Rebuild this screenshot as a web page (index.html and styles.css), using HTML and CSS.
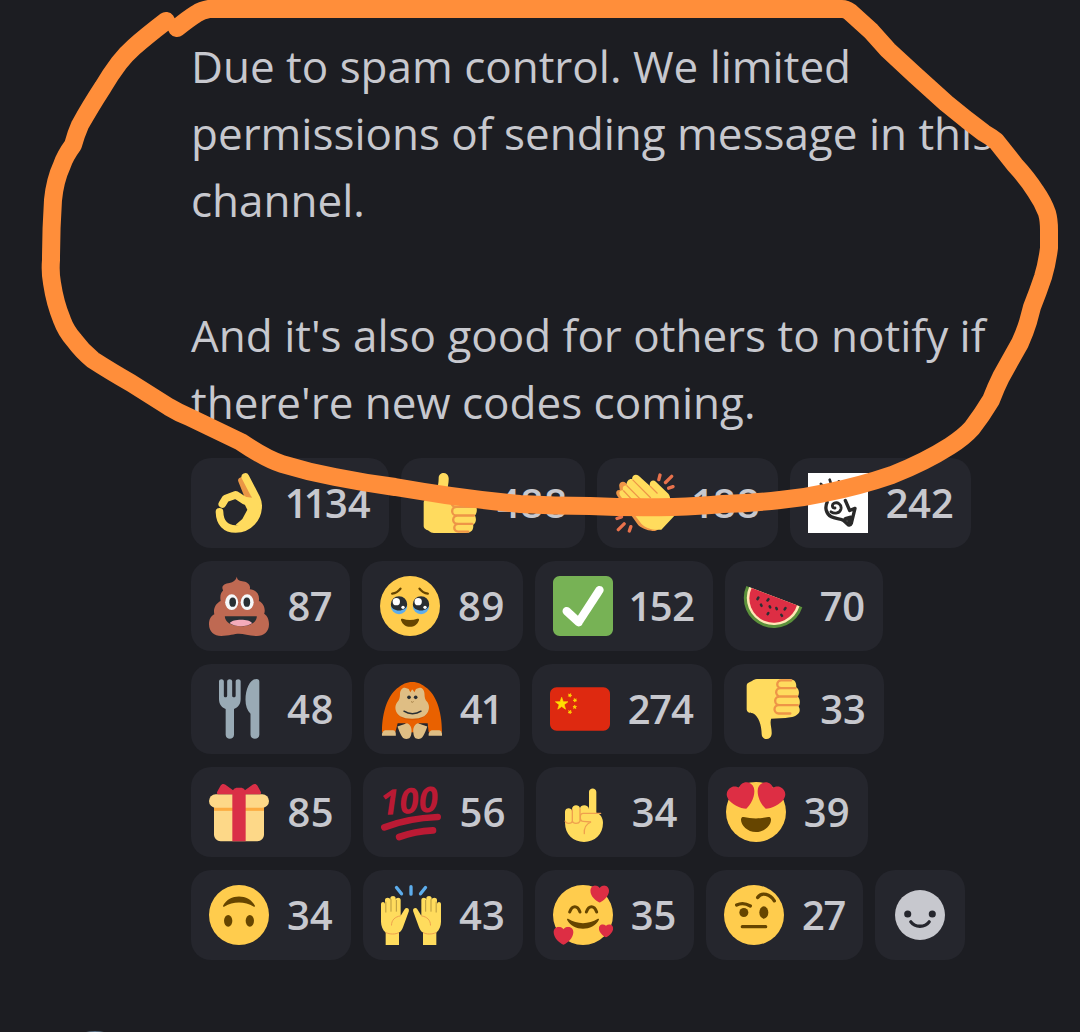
FILE: index.html
```html
<!DOCTYPE html>
<html lang="en">
<head>
<meta charset="utf-8">
<meta name="viewport" content="width=device-width, initial-scale=1">
<title>Codes channel</title>
<link rel="stylesheet" href="styles.css">
</head>
<body>
<svg class="defs" aria-hidden="true">
  <symbol id="thumb" viewBox="0 0 36 36">
    <path fill="#FFDB5E" d="M2.800 4C3 2 5 2 6.600.8 7.400.2 8.500 0 10 0h18c3 0 5 1.500 4.500 5 2 1 2 4 1 5.500 1.500 1.500 1.500 4.500.5 6 2 3.500-1 6-5 6.500-4 .7-8 .8-11.500.8-1 3.200.5 5.200.3 9.200-.3 4-5.900 4-6 0C11.800 28 10 22 6.500 20.500c-2.500 0-3.700-.8-3.700-2.500z"/>
    <path fill="none" stroke="#EE9547" stroke-width="1.400" stroke-linecap="round" d="M29.500.8h-6a2.300 2.300 0 0 0 0 4.700H32M23 5.500a2.500 2.500 0 0 0 0 5h10M22.500 10.500a2.600 2.600 0 0 0 0 5.200h11M22 15.700a2.500 2.500 0 0 0 0 5h7"/>
  </symbol>
  <symbol id="heart" viewBox="0 0 12 11">
    <path fill="#DD2E44" d="M11.900 3.400C11.900 1.500 10.500.1 8.700.1 7.600.1 6.600.7 6 1.600 5.400.7 4.400.1 3.300.1 1.500.1.1 1.500.1 3.400.1 6.700 3.500 9.900 6 10.900c2.500-1 5.900-4.200 5.900-7.500z"/>
  </symbol>
  <symbol id="raised-hand" viewBox="0 0 18 36">
    <path fill="#FFDC5D" d="M2.800 28.500C1 27 0 24.500 0 22V11.500c0-1.700 2.400-1.700 2.400 0V9c0-1.800 3.200-1.800 3.200 0V8c0-1.800 3.200-1.800 3.200 0v1c0-1.800 3-1.800 3 0v9.500l2.400-4c.9-1.300 3-.5 2.500 1.200l-3.500 9.600c-.6 1.600-1.300 2.500-2.400 3.200V36h-8z"/>
    <path fill="none" stroke="#B9983F" stroke-width=".6" d="M2.900 10v6.500M6 8.500V16M9.200 9v7"/>
    <path fill="none" stroke="#EFA04E" stroke-width=".6" d="M11.800 18.500c-3.500.6-5.500 2.500-5.500 5.800M2.800 28.500c2.500 1.200 6 1.200 8 0"/>
  </symbol>
</svg>

<main class="chat">
  <article class="message">
    <div class="text">
      <p>Due to spam control. We limited permissions of sending message in this channel.</p>
      <p>And it's also good for others to notify if there're new codes coming.</p>
    </div>

    <div class="reactions">
      <button class="reaction">
        <svg viewBox="0 0 36 36" aria-hidden="true">
          <path fill="none" stroke="#EA9645" stroke-width="4" stroke-linecap="round" d="M19.500 4.500L24.500 17"/>
          <path fill="none" stroke="#FFDB5E" stroke-width="4.600" stroke-linecap="round" stroke-linejoin="round" d="M6.300 23.300C6.500 30 10 33.600 16 33.600c8 0 13.500-6.500 13.500-14.100 0-1.500-.3-2.700-1-4.200L21.800 2.400"/>
          <path fill="none" stroke="#FFDB5E" stroke-width="4.600" stroke-linecap="round" stroke-linejoin="round" d="M8 18.600l2-3.300 6-2.200 5.500 3.500"/>
          <path fill="#FFDB5E" d="M19 14l8 1 3 8-7 10-7-2 4-3.400L23 22z"/>
        </svg>
        <span class="count">1134</span>
      </button>
      <button class="reaction">
        <svg class="flip" viewBox="0 0 36 36" aria-hidden="true"><use href="#thumb"/></svg>
        <span class="count">488</span>
      </button>
      <button class="reaction">
        <svg viewBox="0 0 36 36" aria-hidden="true">
          <path fill="#EE9547" d="M2.500 7.500c0-2 2.500-3 4-1.500L30 26c-1 5-3 8-6 8.800-4-.2-7-1-10-3.500L1.500 14c-1.600-2-.6-4 1.400-3.700z"/>
          <path fill="#FFDC5D" d="M10.300 3.600C10 1.200 12.700.2 14.200 1.700L21 7.800c-.8-2.500 1.700-4.300 3.500-2.600L32 12.500c1 1 1 2.500 1.500 4.500l2.300 8.500-8 8.500c-5 .5-9-.5-12-3.500L3.300 13.800c-1.600-2.200 0-4 1.700-3.300C4 8.500 5.300 7 7.300 7.600c-1-2.200 1-4.500 3-4z"/>
          <path fill="none" stroke="#EE9547" stroke-width=".7" d="M7 7.500l10 10M10.500 4l11 11M21 7.800l4.500 4.500M5 10.500l8 8.500"/>
          <path fill="none" stroke="#E9724C" stroke-width="2" stroke-linecap="round" d="M27 1.200l-.7 2.800M34 2l-3.700 3.700M34.800 8.200l-2.600.9M1.200 27.300l2.700-1M2 34l3.500-3.500M8.600 34.800l.9-2.600"/>
        </svg>
        <span class="count">188</span>
      </button>
      <button class="reaction">
        <svg viewBox="0 0 36 36" aria-hidden="true">
          <path fill="#fff" d="M0 0h36v36H0z"/>
          <g fill="none" stroke="#292929" stroke-linecap="round" stroke-linejoin="round">
            <path stroke-width="1.600" d="M7.700 6.500l2.500 2.500M13 4l1.500 4.500M18.500 5l-1 3.500"/>
            <path stroke-width="1.700" d="M13.800 23.300c2.200 1.500 5.400.8 6-1.800.5-2.600-2-4.300-4.200-3.300-1.600.9-1 3 .6 2.800"/>
            <path stroke-width="2" d="M11.500 17.500c-1.500 3-.8 7 2.500 8.800 2.500 1.300 5.600.8 7.500 2.300l2.800 2.600c.8.300 1.400-.3 1.700-1l2.200-9-3.200 1.300-2.600-6"/>
            <path stroke-width="2.600" d="M22.500 27.600l3.200-.8-1.200 3.400"/>
          </g>
        </svg>
        <span class="count">242</span>
      </button>

      <button class="reaction">
        <svg viewBox="0 0 36 36" aria-hidden="true">
          <path fill="#BF6952" d="M16.800.3c-.2 2.200 1.700 2.600 4 3 2.700.5 4.300 2.300 3.700 4.600 3.500.3 6.200 3.100 5.400 7.100 2.600 1 4.300 4.600 3.200 7.700C35.200 24 36 26.500 36 29c0 4.600-3.200 7-7.300 7-4.500 0-8-1.300-10.700-1.300S12 36 7.300 36C3.200 36 0 33.500 0 29c0-2.700 1-5 3.200-6C2.400 19.700 4 16.500 7 15c-.6-3 .2-5.300 1.500-6.300C7 6 9.200 4.600 12.300 4.200c2.200-.3 3.700-1.500 4.500-3.900z"/>
          <ellipse fill="#F5F8FA" cx="13.600" cy="15.700" rx="3.900" ry="4.700"/>
          <ellipse fill="#F5F8FA" cx="22.900" cy="15.700" rx="3.900" ry="4.700"/>
          <ellipse fill="#292F33" cx="14.200" cy="15.700" rx="2" ry="2.800"/>
          <ellipse fill="#292F33" cx="22.700" cy="15.700" rx="2" ry="2.800"/>
          <path fill="#292F33" d="M9.500 24.200h19.200c0 3.500-4 6-9.600 6s-9.600-2.500-9.600-6z"/>
          <path fill="#F4ABBA" d="M12.500 28.300c1.500-2.700 12-2.700 13.300 0-3.300 2.400-10 2.400-13.300 0z"/>
        </svg>
        <span class="count">87</span>
      </button>
      <button class="reaction">
        <svg viewBox="0 0 36 36" aria-hidden="true">
          <circle fill="#FFCC4D" cx="18" cy="18" r="18"/>
          <path fill="none" stroke="#664500" stroke-width="1.400" stroke-linecap="round" d="M7.300 10.600c2-.2 3.700-1.200 5-3M28.700 10.600c-2-.2-3.700-1.200-5-3"/>
          <circle fill="#5DADEC" cx="11.400" cy="18" r="4.900"/>
          <circle fill="#5DADEC" cx="24.600" cy="18" r="4.900"/>
          <path fill="#292F33" d="M6.500 17a4.900 4.900 0 0 1 9.800 0c0 5-9.800 5-9.800 0zM19.700 17a4.900 4.900 0 0 1 9.800 0c0 5-9.800 5-9.800 0z"/>
          <circle fill="#fff" cx="9.800" cy="15.400" r="2.200"/>
          <circle fill="#fff" cx="22.900" cy="15.400" r="2.200"/>
          <circle fill="#fff" cx="13.800" cy="18.800" r="1"/>
          <circle fill="#fff" cx="27" cy="18.800" r="1"/>
          <path fill="#664500" d="M12.600 26.500c-.2-.8.500-1 1-.8 2.700 1 6 1 8.800 0 .5-.2 1.200 0 1 .8-1 2.700-3 4-5.400 4s-4.400-1.300-5.400-4z"/>
        </svg>
        <span class="count">89</span>
      </button>
      <button class="reaction">
        <svg viewBox="0 0 36 36" aria-hidden="true">
          <path fill="#77B255" d="M36 32c0 2.209-1.791 4-4 4H4c-2.209 0-4-1.791-4-4V4c0-2.209 1.791-4 4-4h28c2.209 0 4 1.791 4 4v28z"/>
          <path fill="#FFF" d="M29.280 6.362c-1.156-.751-2.704-.422-3.458.736L14.936 23.877l-5.029-4.650c-1.014-.938-2.596-.875-3.533.138-.937 1.014-.875 2.596.139 3.533l7.209 6.666c.48.445 1.090.665 1.696.665.673 0 1.534-.282 2.099-1.139.332-.506 12.500-19.270 12.500-19.270.751-1.159.421-2.707-.737-3.458z"/>
        </svg>
        <span class="count">152</span>
      </button>
      <button class="reaction">
        <svg viewBox="0 0 36 36" aria-hidden="true">
          <path fill="#5C913B" d="M2 6a18 18 0 1 0 33.600 12.800z"/>
          <path fill="#FFE8B6" d="M3.700 6.600a16.200 16.200 0 1 0 30.200 11.600z"/>
          <path fill="#DD2E44" d="M5.200 7.200a14.600 14.600 0 1 0 27.200 10.400z"/>
          <path fill="none" stroke="#292F33" stroke-width="1.500" stroke-linecap="round" d="M9.200 13l-.5.900M15.300 13.900l-.6.800M10.800 17.200l.3.700M16 18.200l.3.600M20 19.200l.3.700M25.500 19.200l-.5.800M15.200 22.200l-.4.700M23 23.300l.4.600"/>
        </svg>
        <span class="count">70</span>
      </button>

      <button class="reaction">
        <svg viewBox="0 0 36 36" aria-hidden="true">
          <path fill="#99AAB5" d="M6 1.400c0-1.700 2.900-1.700 2.900 0V10c0 1.300 2 1.300 2 0V1.400c0-1.700 3-1.700 3 0V10c0 1.300 2.100 1.300 2.100 0V1.400c0-1.700 3-1.700 3 0V12c0 3-1.500 5-4 6v15.500c0 3.200-5 3.200-5 0V18c-2.500-1-4-3-4-6z"/>
          <path fill="#99AAB5" d="M28.500 0c1.200 0 1.700.6 1.700 1.700v31.800c0 3.200-5.300 3.200-5.300 0V20.800c-2-2-3-4.600-3-8.300C21.900 6 24.500 0 28.500 0z"/>
        </svg>
        <span class="count">48</span>
      </button>
      <button class="reaction">
        <svg viewBox="0 0 36 36" aria-hidden="true">
          <path fill="#E96100" d="M18.200 1.800c3.500 0 6 1.500 8 3.200 6 4 9.800 14 9.800 27h-8l-.6-5.500h-18L8 32H0C0 19 4 9 10 5c2-1.700 4.700-3.200 8.200-3.200z"/>
          <path fill="#C94F00" d="M8.500 18c0 9 19 9 19.500 0z" opacity=".5"/>
          <path fill="#E96100" d="M14 25h8v7h-8z"/>
          <path fill="#DFBE84" d="M10.800 9c0-4 4-5.500 7.300-2.500C21.500 3.500 25.500 5 25.500 9c0 2 .3 3.500 1.800 5 1.700 2.500 1 6.500-2 8.300-4 2-10.500 2-14.400 0-3-1.800-3.700-5.800-1.800-8.300 1.400-1.500 1.700-3 1.700-5z"/>
          <path fill="#E96100" d="M13 5l3 1 1 2 1.200-2L19.400 8l1-2 3-1-5.200-2.200z"/>
          <circle fill="#292F33" cx="16.200" cy="11" r="1.100"/>
          <circle fill="#292F33" cx="20.200" cy="11" r="1.100"/>
          <path fill="none" stroke="#292F33" stroke-width=".9" stroke-linecap="round" d="M13.200 19.300c3 2 7.200 2 10.200 0"/>
          <path fill="none" stroke="#A58048" stroke-width=".6" d="M17.400 13.500l.8.500.8-.5"/>
          <path fill="#DFBE84" d="M0 34c-.2-2 1-3.200 2.500-3.200h4C8 30.800 8.400 32 8.300 34zM28 34c-.2-2 1-3.200 2.500-3.200h3.200c1.800 0 2.500 1.200 2.300 3.200zM9.300 28.500l5.700-2c2 .8 3 2.500 2.700 5.500-.2 3-1.200 4-3 4-2.700 0-3.500-2.500-5.400-7.500zM27.200 28.500l-5.700-2c-2 .8-3 2.500-2.700 5.500.2 3 1.200 4 3 4 2.700 0 3.500-2.500 5.400-7.500z"/>
        </svg>
        <span class="count">41</span>
      </button>
      <button class="reaction">
        <svg viewBox="0 0 36 36" aria-hidden="true">
          <path fill="#DE2910" d="M36 27c0 2.209-1.791 4-4 4H4c-2.209 0-4-1.791-4-4V9c0-2.209 1.791-4 4-4h28c2.209 0 4 1.791 4 4v18z"/>
          <path fill="#FFDE02" stroke="#FFDE02" stroke-width=".4" d="M11.136 8.977l.736.356.589-.566-.111.81.72.386-.804.144-.144.804-.386-.72-.81.111.566-.589zm4.665 2.941l-.356.735.566.590-.809-.112-.386.721-.144-.805-.805-.144.721-.386-.112-.810.590.566zm-.957 3.779l.268.772.817.017-.651.493.237.783-.671-.467-.671.467.236-.783-.651-.493.817-.017zm-3.708 3.280l.736.356.589-.566-.111.810.720.386-.804.144-.144.804-.386-.720-.810.111.566-.589zM7 10.951l.929 2.671 2.826.058-2.253 1.708.819 2.706L7 16.479l-2.321 1.615.819-2.706-2.253-1.708 2.826-.058z"/>
        </svg>
        <span class="count">274</span>
      </button>
      <button class="reaction">
        <svg viewBox="0 0 36 36" aria-hidden="true"><use href="#thumb"/></svg>
        <span class="count">33</span>
      </button>

      <button class="reaction">
        <svg viewBox="0 0 36 36" aria-hidden="true">
          <path fill="#FDD888" d="M33 31.500c0 2.200-1.800 4-4 4H7c-2.200 0-4-1.800-4-4V14h30z"/>
          <rect fill="#FCAB40" x="3" y="14" width="30" height="3.300"/>
          <rect fill="#FDD888" y="7.400" width="36" height="8" rx="4"/>
          <path fill="#DA2F47" d="M19 3.500h-2c-1.700 0-3 1.300-3 3v29h8v-29c0-1.700-1.300-3-3-3z"/>
          <path fill="#DA2F47" d="M16 7.400c1.100 0 1.263-.516.361-1.147L9.639 1.547c-.902-.631-2.085-.366-2.631.589L4.992 5.664C4.446 6.619 4.900 7.400 6 7.400h10zm4 0c-1.100 0-1.263-.516-.361-1.147l6.723-4.706c.901-.631 2.085-.366 2.631.589l2.016 3.527C31.554 6.619 31.100 7.400 30 7.400H20z"/>
        </svg>
        <span class="count">85</span>
      </button>
      <button class="reaction">
        <svg viewBox="0 0 36 36" aria-hidden="true">
          <text class="hundred" x="0" y="20" transform="rotate(-4 0 20)">100</text>
          <path fill="none" stroke="#BB1A34" stroke-width="4" stroke-linecap="round" d="M2 27.200c9.500-3.700 20-5.700 32-6.200M10.900 33c6-2.200 13-3.600 20.300-4"/>
        </svg>
        <span class="count">56</span>
      </button>
      <button class="reaction">
        <svg viewBox="0 0 36 36" aria-hidden="true">
          <path fill="#FFDC5D" d="M21 6c0-2.900 4.400-2.900 4.400 0v12.500c2.600.8 4 3.200 4 6 0 7-5 11.500-11.400 11.500S6.600 31.500 6.600 24.500v-6.700c0-2.700 4-2.700 4.200-.6v-1c0-3 4.600-3 4.800-.3.200-2.600 5-2.700 5.400.3z"/>
          <path fill="none" stroke="#EFA04E" stroke-width=".8" stroke-linecap="round" d="M6.700 23.500c.5 1.700 4 1.700 4.300 0v-7M11 23.500c.5 1.700 3.800 1.700 4.600 0V16M28 18.800h-10.500c-2.300 0-2.300 4.600 0 4.800l4.700.4c-2.500 1-4.300 3.300-4 7"/>
        </svg>
        <span class="count">34</span>
      </button>
      <button class="reaction">
        <svg viewBox="0 0 36 36" aria-hidden="true">
          <circle fill="#FFCC4D" cx="18" cy="18" r="18"/>
          <path fill="#664500" d="M18 21.849c-2.966 0-4.935-.346-7.369-.819-.557-.106-1.638 0-1.638 1.638 0 3.275 3.763 7.369 9.007 7.369s9.007-4.094 9.007-7.369c0-1.638-1.082-1.745-1.638-1.638-2.434.473-4.402.819-7.369.819"/>
          <path fill="#DD2E44" d="M16.650 3.281C15.791.850 13.126-.426 10.694.431c-1.476.520-2.521 1.711-2.928 3.104-1.191-.829-2.751-1.100-4.225-.580C1.111 3.813-.167 6.480.692 8.911c.122.344.284.663.472.958 1.951 3.582 7.588 6.100 11.001 6.131 2.637-2.167 5.446-7.665 4.718-11.677-.038-.348-.113-.698-.233-1.042zm2.700 0C20.209.850 22.875-.426 25.306.431c1.476.520 2.521 1.711 2.929 3.104 1.191-.829 2.751-1.100 4.225-.580 2.430.858 3.707 3.525 2.850 5.956-.123.344-.284.663-.473.958-1.951 3.582-7.588 6.100-11.002 6.131-2.637-2.167-5.445-7.665-4.717-11.677.037-.348.112-.698.232-1.042z"/>
        </svg>
        <span class="count">39</span>
      </button>

      <button class="reaction">
        <svg viewBox="0 0 36 36" aria-hidden="true">
          <circle fill="#FFCC4D" cx="18" cy="18" r="18"/>
          <ellipse fill="#664500" cx="11.500" cy="21.500" rx="2.500" ry="3.500"/>
          <ellipse fill="#664500" cx="24.500" cy="21.500" rx="2.500" ry="3.500"/>
          <path fill="#664500" d="M8.500 12.300C12 5 24 5 27.500 12.300c.3.700-.3 1-.8.600-5-3.300-12.400-3.300-17.400 0-.5.400-1.100.1-.8-.6z"/>
        </svg>
        <span class="count">34</span>
      </button>
      <button class="reaction">
        <svg viewBox="0 0 36 36" aria-hidden="true">
          <use href="#raised-hand" width="18" height="36"/>
          <use href="#raised-hand" width="18" height="36" transform="matrix(-1 0 0 1 36 0)"/>
          <path fill="none" stroke="#5DADEC" stroke-width="2" stroke-linecap="round" d="M9.300 1.500l3 3.800M18 1v4.500M26.700 1.500l-3 3.800"/>
        </svg>
        <span class="count">43</span>
      </button>
      <button class="reaction">
        <svg viewBox="0 0 36 36" aria-hidden="true">
          <circle fill="#FFCC4D" cx="18" cy="18" r="18"/>
          <path fill="none" stroke="#664500" stroke-width="1.800" stroke-linecap="round" d="M10 16.200c1.500-4.300 4.700-4.300 6.200 0M20 16.200c1.500-4.300 4.700-4.300 6.200 0"/>
          <path fill="#664500" d="M8.500 21c-.3-.7.300-1 .8-.6 5 3.300 12.400 3.300 17.400 0 .5-.4 1.100-.1.800.6-3.500 7-15.500 7-19 0z"/>
          <use href="#heart" x="22.300" y=".2" width="11.400" height="10.500"/>
          <use href="#heart" x="0" y="25" width="12.600" height="11"/>
          <use href="#heart" x="27.400" y="23.500" width="8.800" height="8"/>
        </svg>
        <span class="count">35</span>
      </button>
      <button class="reaction">
        <svg viewBox="0 0 36 36" aria-hidden="true">
          <circle fill="#FFCC4D" cx="18" cy="18" r="18"/>
          <ellipse fill="#664500" cx="11.900" cy="16.500" rx="2.700" ry="2.700"/>
          <ellipse fill="#664500" cx="23.900" cy="16.500" rx="2.700" ry="3.700"/>
          <path fill="none" stroke="#664500" stroke-width="2" stroke-linecap="round" d="M7.600 12c2.500-1.200 5.500-1 8.200.6M20.200 7.500c2.500-3.700 7.500-1.800 10 2M11 25h14"/>
        </svg>
        <span class="count">27</span>
      </button>
      <button class="reaction add" aria-label="Add reaction">
        <svg viewBox="0 0 24 24" aria-hidden="true">
          <circle fill="#c7c8ce" cx="12" cy="12" r="12"/>
          <circle fill="#25262d" cx="6.100" cy="11.500" r="1.700"/>
          <circle fill="#25262d" cx="17.900" cy="11.500" r="1.700"/>
          <path fill="none" stroke="#25262d" stroke-width="1.600" stroke-linecap="round" d="M7.600 15.300c2 2.800 6.800 2.800 8.800 0"/>
        </svg>
      </button>
    </div>
  </article>

  <article class="next-message">
    <span class="avatar"></span>
  </article>

  <!-- hand drawn marker line round the text -->
  <svg class="marker" viewBox="0 0 1080 1032" aria-hidden="true">
    <path d="M166 21C153 31 143 39 134 47Q126 54 119 63Q110 75 103 87Q90 107 80 125Q76 134 73 145Q65 156 62 165Q55 180 53 200Q51 230 51 260Q50 272 52 283Q55 303 62 320Q66 331 74 340Q82 351 93 360Q110 371 131 383L169 407Q179 413 189 417L241 442Q266 459 282 464Q308 472 335 477Q365 483 395 487Q457 498 520 504Q555 506 590 506Q630 508 673 507Q700 506 723 504Q755 503 780 500Q803 498 825 493Q860 486 892 475Q925 462 950 446Q964 437 972 428Q982 415 991 400Q996 387 1001 377L1020 343Q1025 332 1028 322L1032 307Q1038 292 1043 277Q1047 264 1049 248V230Q1049 220 1047 213Q1043 202 1036 192Q1028 179 1015 165L996 141Q991 137 984 133L967 120L946 103L915 75L888 50L871 31L850 12Q846 9 842 9H209Q202 10 196 14Q188 19 177 28"/>
  </svg>
</main>
</body>
</html>
```

FILE: styles.css
```css
* {
  box-sizing: border-box;
}

body {
  margin: 0;
  background: #1c1d22;
  color: #c7c8ce;
  font-family: "Open Sans", "Noto Sans", sans-serif;
}

.defs {
  display: none;
}

.chat {
  position: relative;
  overflow: hidden;
}

.message {
  padding: 33px 60px 71px 191px;
}

.text {
  font-size: 44px;
  line-height: 67px;
}

.text p {
  margin: 0 0 68px;
}

.text p:last-child {
  margin-bottom: 22px;
}

/* Reactions */
.reactions {
  display: flex;
  flex-wrap: wrap;
  gap: 13px 12px;
}

.reaction {
  display: flex;
  align-items: center;
  gap: 18px;
  height: 90px;
  padding: 0 18px;
  border: 0;
  border-radius: 20px;
  background: #25262d;
  color: inherit;
  font-family: inherit;
  cursor: pointer;
}

.reaction svg {
  width: 60px;
  height: 60px;
  overflow: visible;
}

.reaction .flip {
  transform: scaleY(-1);
}

.count {
  font-size: 40px;
  font-weight: 600;
  line-height: 60px;
  font-variant-numeric: proportional-nums;
}

.reaction.add {
  padding: 0 20px;
}

.reaction.add svg {
  width: 50px;
  height: 50px;
}

.hundred {
  fill: #bb1a34;
  font-size: 21px;
  font-weight: 700;
  font-style: italic;
}

/* Top edge of the following message */
.next-message {
  height: 1px;
  padding: 0 55px;
  overflow: hidden;
}

.avatar {
  display: block;
  width: 80px;
  height: 80px;
  border-radius: 50%;
  background: #5a7186;
}

.marker {
  position: absolute;
  top: 0;
  left: 0;
  width: 100%;
  pointer-events: none;
}

.marker path {
  fill: none;
  stroke: #ff8e3a;
  stroke-width: 18;
  stroke-linecap: round;
  stroke-linejoin: round;
}
```
